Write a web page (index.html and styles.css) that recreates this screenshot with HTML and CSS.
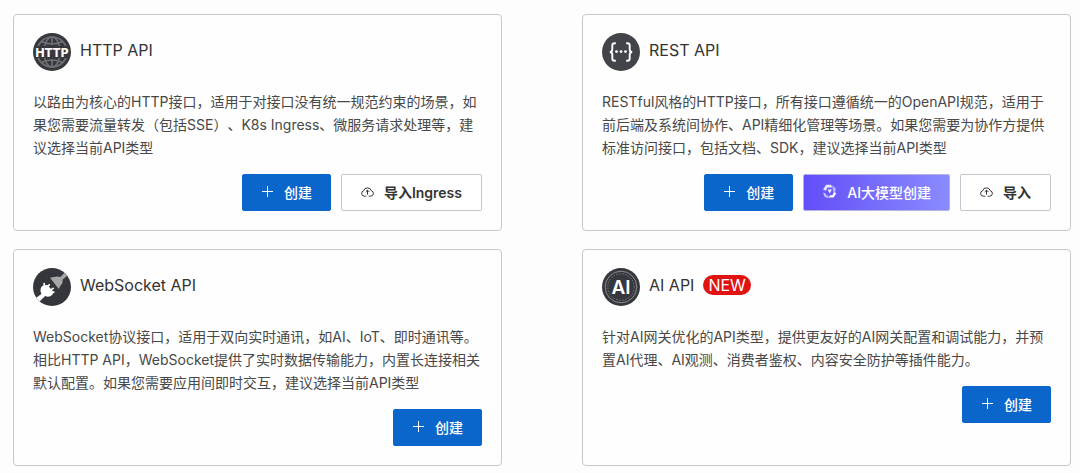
FILE: index.html
```html
<!DOCTYPE html>
<html lang="zh-CN">
<head>
<meta charset="utf-8">
<meta name="viewport" content="width=device-width, initial-scale=1">
<title>API</title>
<link rel="stylesheet" href="styles.css">
</head>
<body>
<svg class="sprite" aria-hidden="true">
  <symbol id="plus" viewBox="0 0 13 13"><path d="M6.5 1v11M1 6.5h11" fill="none" stroke="currentColor" stroke-width="1"/></symbol>
  <symbol id="cloud" viewBox="0 0 13 13"><path d="M4.600 11.200H3.300a2.800 2.800 0 0 1-.6-5.500 3.950 3.950 0 0 1 7.600 0 2.800 2.800 0 0 1-.6 5.500H8.400M4.600 11.200h.8M7.600 11.200h.8M6.500 9.600V5.200M4.700 6.900l1.800-1.800 1.800 1.800" fill="none" stroke="currentColor" stroke-width="1"/></symbol>
</svg>
<main class="cards">
  <section class="card">
    <header class="card-head">
      <svg class="logo" viewBox="0 0 38 38" aria-hidden="true">
        <circle cx="19" cy="19" r="19" fill="#36383d"/>
        <g fill="none" stroke="#6f7175" stroke-width="1.600">
          <circle cx="19" cy="19" r="15"/>
          <ellipse cx="19" cy="19" rx="8" ry="15"/>
          <path d="M19 4v8M19 26v8M8.500 8.500q10.500 5 21 0M8.500 29.500q10.500-5 21 0"/>
        </g>
        <path d="M2 13h34v12H2z" fill="#36383d"/>
        <text class="logo-http" x="19" y="23.500">HTTP</text>
      </svg>
      <h2 class="title">HTTP API</h2>
    </header>
    <p class="desc">以路由为核心的HTTP接口，适用于对接口没有统一规范约束的场景，如果您需要流量转发（包括SSE）、K8s Ingress、微服务请求处理等，建议选择当前API类型</p>
    <div class="actions">
      <button class="btn primary" type="button"><svg class="icon"><use href="#plus"/></svg>创建</button>
      <button class="btn" type="button"><svg class="icon"><use href="#cloud"/></svg>导入Ingress</button>
    </div>
  </section>

  <section class="card">
    <header class="card-head">
      <svg class="logo" viewBox="0 0 38 38" aria-hidden="true">
        <circle cx="19" cy="19" r="19" fill="#424449"/>
        <path d="M13.800 10.200h-1.200q-2.300 0-2.300 2.300v3.700q0 2.800-2.500 2.800 2.500 0 2.500 2.800v3.700q0 2.300 2.300 2.300h1.200M24.200 10.200h1.200q2.300 0 2.300 2.300v3.700q0 2.800 2.500 2.800-2.500 0-2.500 2.800v3.700q0 2.300-2.300 2.300h-1.200" fill="none" stroke="#fff" stroke-width="1.900"/>
        <g fill="#fff"><circle cx="14.500" cy="18.600" r="1.400"/><circle cx="19" cy="18.600" r="1.400"/><circle cx="23.500" cy="18.600" r="1.400"/></g>
      </svg>
      <h2 class="title">REST API</h2>
    </header>
    <p class="desc">RESTful风格的HTTP接口，所有接口遵循统一的OpenAPI规范，适用于前后端及系统间协作、API精细化管理等场景。如果您需要为协作方提供标准访问接口，包括文档、SDK，建议选择当前API类型</p>
    <div class="actions">
      <button class="btn primary" type="button"><svg class="icon"><use href="#plus"/></svg>创建</button>
      <button class="btn ai" type="button"><svg class="icon icon-ai" viewBox="0 0 14 14"><g fill="#fff"><path d="M3.800.8h4.600l1.200 2.400H5.200L3.600 6.400 1 5.200z" opacity=".85"/><path d="M9.600 1.200l3.400 3-1 4.200-1.400-1L10 4.400z" opacity=".55"/><path d="M13.400 8.400l-2.600 4.200H6.400l1-2.200h2.400l1.200-2.600z"/><path d="M6 13.200L2.400 12 .8 8l2.400.6 1 2 2 .8z" opacity=".6"/><path d="M5.200 5.200h4L7.200 8.800z" opacity=".9"/></g></svg>AI大模型创建</button>
      <button class="btn" type="button"><svg class="icon"><use href="#cloud"/></svg>导入</button>
    </div>
  </section>

  <section class="card">
    <header class="card-head">
      <svg class="logo" viewBox="0 0 38 38" aria-hidden="true">
        <defs><clipPath id="disc"><circle cx="19" cy="19" r="19"/></clipPath></defs>
        <g clip-path="url(#disc)">
          <path d="M0 0h38v38H0z" fill="#34363b"/>
          <path d="M17 9.800l4-.8q3.500-1.200 6.500 0L33 3l3 3.200-6.500 5.600q.8 3.400-2 5.700l-1.700 3.400z" fill="#a6a6a7"/>
          <path d="M8.600 18.600l2.600-1.300 3.200-.3 5.800 6.600-.6 2.800q-3.300 3.600-7.400 1.700L4 36l-4-4 8.400-6q-2-3.600.2-7.400z" fill="#fff"/>
          <path d="M11.200 18.600V15.600M14.400 19.500l1.800-2.700M17.200 22.400l3-2M19 24.600l1.800-.4" fill="none" stroke="#fff" stroke-width="1.700" stroke-linecap="round"/>
        </g>
      </svg>
      <h2 class="title">WebSocket API</h2>
    </header>
    <p class="desc">WebSocket协议接口，适用于双向实时通讯，如AI、IoT、即时通讯等。相比HTTP API，WebSocket提供了实时数据传输能力，内置长连接相关默认配置。如果您需要应用间即时交互，建议选择当前API类型</p>
    <div class="actions">
      <button class="btn primary" type="button"><svg class="icon"><use href="#plus"/></svg>创建</button>
    </div>
  </section>

  <section class="card">
    <header class="card-head">
      <svg class="logo" viewBox="0 0 38 38" aria-hidden="true">
        <circle cx="19" cy="19" r="19" fill="#36383d"/>
        <circle cx="19" cy="19" r="15.800" fill="none" stroke="#8a8b8e" stroke-width="1"/>
        <circle cx="19" cy="19" r="13.200" fill="none" stroke="#77797c" stroke-width="1" stroke-dasharray="1.500 1.500"/>
        <path d="M9 12h20v14H9z" fill="#36383d"/>
        <text class="logo-ai" x="19" y="25.500">AI</text>
      </svg>
      <h2 class="title">AI API</h2>
      <span class="badge">NEW</span>
    </header>
    <p class="desc">针对AI网关优化的API类型，提供更友好的AI网关配置和调试能力，并预置AI代理、AI观测、消费者鉴权、内容安全防护等插件能力。</p>
    <div class="actions">
      <button class="btn primary" type="button"><svg class="icon"><use href="#plus"/></svg>创建</button>
    </div>
  </section>
</main>
</body>
</html>
```

FILE: styles.css
```css
* { box-sizing: border-box; }

body {
  margin: 0;
  padding: 14px 9px 7px 13px;
  background: #fdfdfd;
  color: #333;
  font-family: Inter, "Noto Sans CJK SC", sans-serif;
  font-size: 14px;
  text-spacing-trim: space-all;
}

.sprite { position: absolute; width: 0; height: 0; }

.cards {
  display: grid;
  grid-template-columns: 1fr 1fr;
  gap: 18px 80px;
}

.card {
  padding: 18px 19px 19px;
  border: 1px solid #c8c8c8;
  border-radius: 4px;
  background: #fefefe;
}

.card-head { display: flex; gap: 9px; }

.logo { flex: none; width: 38px; height: 38px; }
.logo-http, .logo-ai { fill: #fff; text-anchor: middle; }
.logo-http { font-size: 12px; font-weight: 800; }
.logo-ai { font-size: 19px; font-weight: 600; }

.title {
  margin: 0;
  font-size: 16px;
  font-weight: 400;
  line-height: 34px;
}

.badge {
  height: 20px;
  margin-top: 7px;
  padding: 0 5px;
  border-radius: 10px;
  background: #e01212;
  color: #fff;
  font-size: 16px;
  line-height: 20px;
}

.desc {
  margin: 19px 0 15px;
  color: #484848;
  line-height: 23px;
}

.actions {
  display: flex;
  flex-wrap: wrap;
  justify-content: flex-end;
  gap: 10px;
}

.btn {
  display: flex;
  align-items: center;
  gap: 10px;
  height: 37px;
  padding: 0 19px 2px;
  border: 1px solid #c2c7ce;
  border-radius: 2px;
  background: #fff;
  color: #333;
  font: inherit;
  font-weight: 600;
  white-space: nowrap;
  cursor: pointer;
}

.btn.primary {
  padding: 0 18px 2px;
  border-color: #0a66ca;
  background: #0a66ca;
  color: #fff;
  font-weight: 500;
}

.btn.ai {
  padding: 0 18px 2px;
  border-color: #b4b3dc;
  background: linear-gradient(90deg, #624ef8, #8b8bff) border-box;
  color: #fff;
  font-weight: 500;
}

.icon { flex: none; width: 13px; height: 13px; }
.icon-ai { width: 15px; height: 15px; }
```
